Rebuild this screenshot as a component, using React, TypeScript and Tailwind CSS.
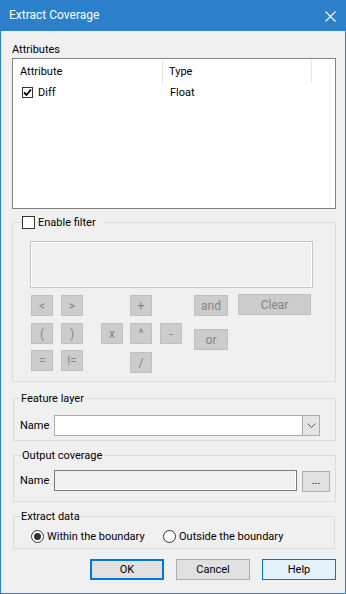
import React from 'react'

const opBtn =
  'h-[21px] w-[22px] bg-[#cccccc] border border-[#bfbfbf] text-[#838383] flex items-center justify-center leading-none'

function Radio({ checked }: { checked?: boolean }) {
  return (
    <span className="w-[13px] h-[13px] rounded-full border border-[#333333] bg-white flex items-center justify-center shrink-0">
      {checked && <span className="w-[7px] h-[7px] rounded-full bg-[#333333]" />}
    </span>
  )
}

export default function App() {
  return (
    <div className="w-[346px] h-[594px] flex flex-col bg-[#f0f0f0] text-[11px] leading-[15px] text-black font-['Roboto','Segoe_UI',sans-serif]">
      {/* title bar */}
      <div className="h-[31px] shrink-0 bg-[#2b7fcb] flex items-center justify-between pl-[9px] pr-[10px] text-white">
        <span className="text-[12px]">Extract Coverage</span>
        <svg width="11" height="11" viewBox="0 0 11 11" className="mt-[1px]">
          <path d="M0.5 0.5 L10.5 10.5 M10.5 0.5 L0.5 10.5" stroke="white" strokeWidth="1.1" />
        </svg>
      </div>

      <div className="flex-1 flex flex-col border-x border-b border-[#2b7fcb] pl-[11px] pr-[9px] pt-[11px]">
        <div className="h-[15px]">Attributes</div>

        {/* attribute list */}
        <div className="mt-[1px] h-[151px] bg-white border border-[#828282] flex flex-col">
          <div className="h-[25px] flex items-stretch">
            <div className="w-[150px] pl-[7px] flex items-center border-r border-[#e5e5e5] my-[1px]">Attribute</div>
            <div className="w-[149px] pl-[6px] flex items-center border-r border-[#e5e5e5] my-[1px]">Type</div>
          </div>
          <div className="h-[16px] flex items-center">
            <div className="w-[150px] pl-[9px] flex items-center">
              <span className="w-[11px] h-[11px] border border-[#333333] bg-white flex items-center justify-center">
                <svg width="9" height="9" viewBox="0 0 9 9">
                  <path d="M1 4.5 L3.5 7 L8 1.5" fill="none" stroke="#000" strokeWidth="1.8" />
                </svg>
              </span>
              <span className="ml-[5px]">Diff</span>
            </div>
            <div className="pl-[7px]">Float</div>
          </div>
        </div>

        {/* enable filter */}
        <fieldset className="mt-[6px] border border-[#dcdcdc]">
          <legend className="ml-[9px] pr-[9px] flex items-center h-[15px]">
            <span className="w-[13px] h-[13px] border border-[#333333] bg-white" />
            <span className="ml-[3px]">Enable filter</span>
          </legend>
          <div className="pl-[17px] pb-[8px] pt-[11px]">
            <div className="w-[283px] h-[47px] border border-[#c6c6c6] shadow-[inset_0_0_0_1px_#ffffff] bg-[#f0f0f0]" />
            <div className="mt-[7px] ml-[1px] grid grid-cols-[30px_40px_29px_30px_34px_44px_73px] grid-rows-[28px_27px_23px] items-start text-[12px]">
              <div className={`${opBtn} col-start-1 row-start-1`}>&lt;</div>
              <div className={`${opBtn} col-start-2 row-start-1`}>&gt;</div>
              <div className={`${opBtn} col-start-4 row-start-1`}>+</div>
              <div className={`${opBtn} !w-[34px] col-start-6 row-start-1`}>and</div>
              <div className={`${opBtn} !w-[73px] col-start-7 row-start-1 -mt-[1px]`}>Clear</div>

              <div className={`${opBtn} col-start-1 row-start-2`}>(</div>
              <div className={`${opBtn} col-start-2 row-start-2`}>)</div>
              <div className={`${opBtn} col-start-3 row-start-2`}>x</div>
              <div className={`${opBtn} col-start-4 row-start-2`}>^</div>
              <div className={`${opBtn} col-start-5 row-start-2`}>-</div>
              <div className={`${opBtn} !w-[34px] col-start-6 row-start-2 mt-[6px]`}>or</div>

              <div className={`${opBtn} col-start-1 row-start-3`}>=</div>
              <div className={`${opBtn} col-start-2 row-start-3`}>!=</div>
              <div className={`${opBtn} col-start-4 row-start-3 mt-[2px]`}>/</div>
            </div>
          </div>
        </fieldset>

        {/* feature layer */}
        <fieldset className="mt-[9px] ml-[1px] border border-[#dcdcdc]">
          <legend className="ml-[6px] px-[1px]">Feature layer</legend>
          <div className="flex items-center pl-[6px] pt-[9px] pb-[4px]">
            <span className="w-[34px]">Name</span>
            <div className="w-[266px] h-[21px] bg-white border border-[#adadad] flex justify-end">
              <div className="w-[17px] h-full bg-[#e5e5e5] border-l border-[#adadad] flex items-center justify-center">
                <svg width="9" height="5" viewBox="0 0 9 5">
                  <path d="M0.5 0.5 L4.5 4.5 L8.5 0.5" fill="none" stroke="#555" strokeWidth="1" />
                </svg>
              </div>
            </div>
          </div>
        </fieldset>

        {/* output coverage */}
        <fieldset className="mt-[7px] ml-[1px] border border-[#dcdcdc]">
          <legend className="ml-[7px] px-[1px]">Output coverage</legend>
          <div className="flex items-start pl-[6px] pt-[7px] pb-[9px]">
            <span className="w-[34px] h-[21px] flex items-center">Name</span>
            <div className="w-[243px] h-[21px] bg-[#f0f0f0] border border-[#7a7a7a] shadow-[inset_-1px_-1px_0_#ffffff]" />
            <div className="ml-[5px] mt-[1px] w-[28px] h-[21px] bg-[#e1e1e1] border border-[#adadad] flex items-center justify-center leading-none pb-[2px]">
              ...
            </div>
          </div>
        </fieldset>

        {/* extract data */}
        <fieldset className="mt-[7px] ml-[1px] mr-[1px] border border-[#dcdcdc]">
          <legend className="ml-[6px] px-[1px]">Extract data</legend>
          <div className="flex items-center h-[15px] box-content pl-[17px] pt-[5px] pb-[4px]">
            <div className="w-[132px] flex items-center">
              <Radio checked />
              <span className="ml-[3px]">Within the boundary</span>
            </div>
            <Radio />
            <span className="ml-[3px]">Outside the boundary</span>
          </div>
        </fieldset>

        {/* dialog buttons */}
        <div className="mt-[10px] flex justify-end">
          <button className="w-[74px] h-[21px] bg-[#e1e1e1] border-2 border-[#0078d7] flex items-center justify-center">
            OK
          </button>
          <button className="ml-[12px] w-[74px] h-[21px] bg-[#e1e1e1] border border-[#adadad] flex items-center justify-center">
            Cancel
          </button>
          <button className="ml-[12px] w-[74px] h-[21px] bg-[#e5f1fb] border border-[#0078d7] flex items-center justify-center">
            Help
          </button>
        </div>
      </div>
    </div>
  )
}
